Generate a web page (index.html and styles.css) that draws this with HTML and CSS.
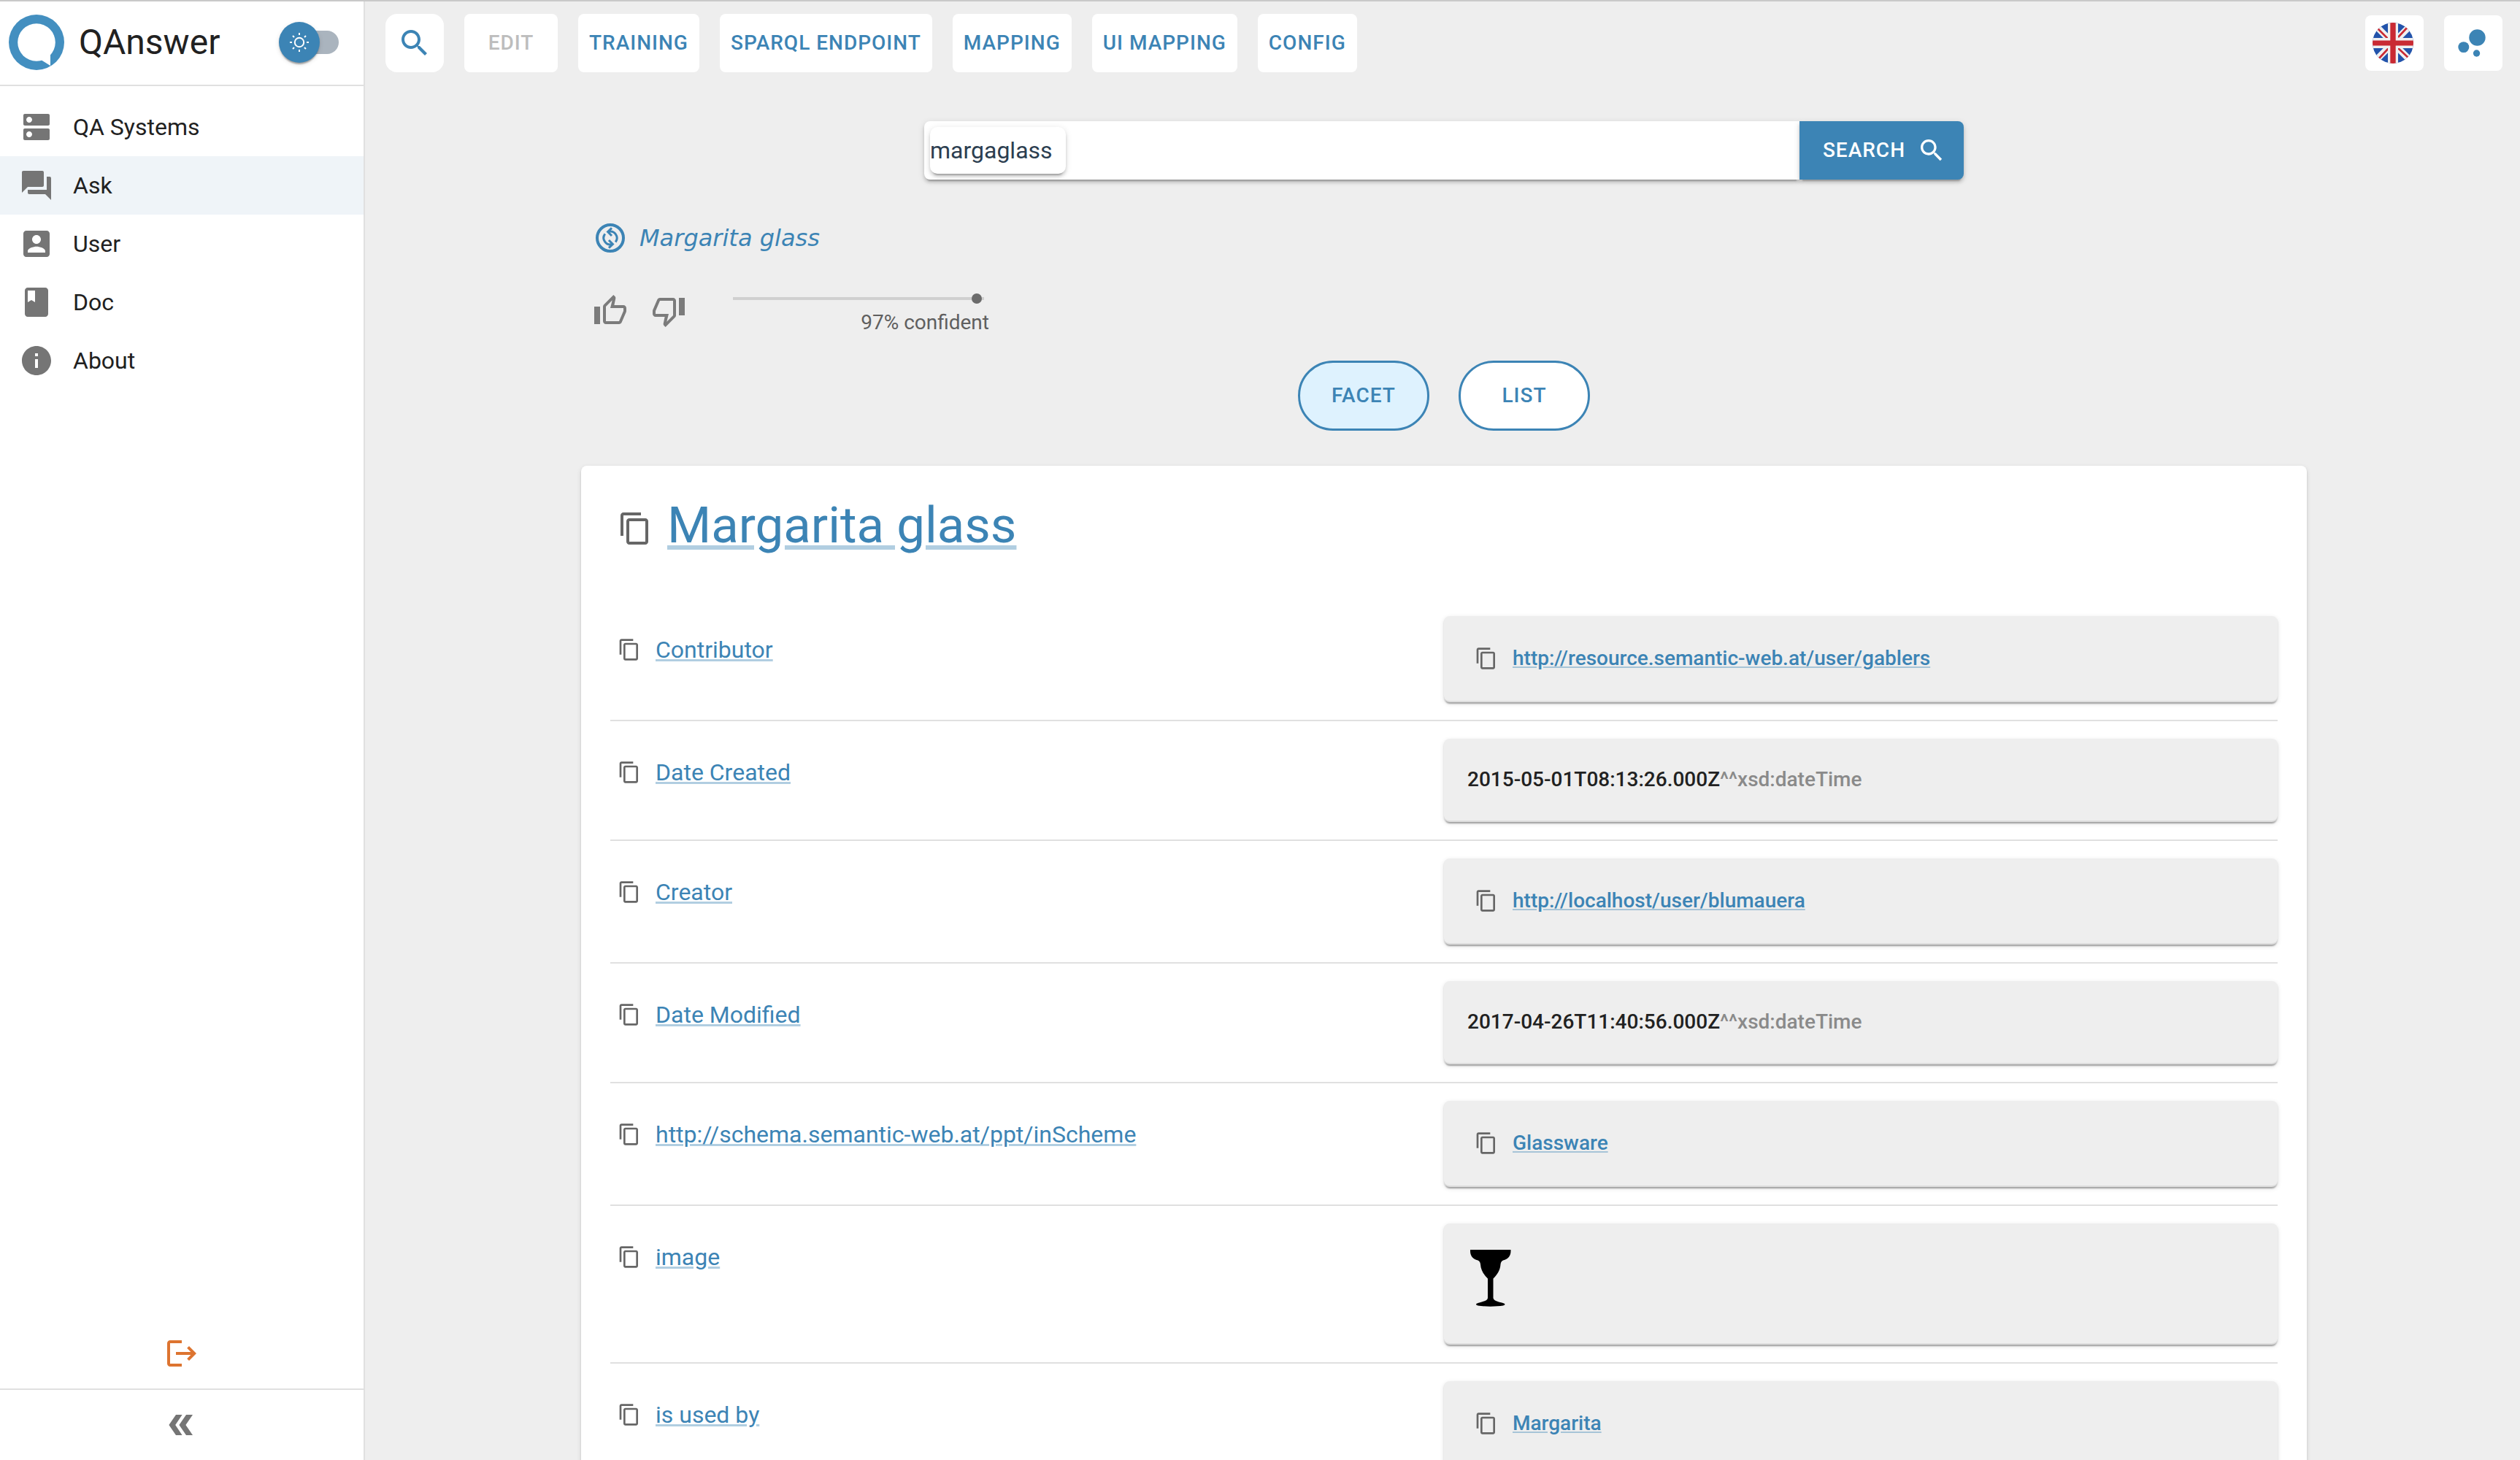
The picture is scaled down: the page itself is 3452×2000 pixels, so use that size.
FILE: index.html
```html
<!DOCTYPE html>
<html lang="en">
<head>
<meta charset="utf-8">
<meta name="viewport" content="width=device-width, initial-scale=1">
<title>QAnswer</title>
<link rel="stylesheet" href="styles.css">
</head>
<body>
<svg class="sprite" aria-hidden="true">
  <symbol id="copy" viewBox="0 0 24 24"><path d="M16 1H4c-1.1 0-2 .9-2 2v14h2V3h12V1zm3 4H8c-1.1 0-2 .9-2 2v14c0 1.1.9 2 2 2h11c1.1 0 2-.9 2-2V7c0-1.1-.9-2-2-2zm0 16H8V7h11v14z"/></symbol>
  <symbol id="search" viewBox="0 0 24 24"><path d="M15.5 14h-.79l-.28-.27C15.41 12.59 16 11.11 16 9.5 16 5.91 13.09 3 9.5 3S3 5.91 3 9.5 5.91 16 9.5 16c1.61 0 3.09-.59 4.23-1.57l.27.28v.79l5 4.99L20.49 19l-4.99-5zm-6 0C7.01 14 5 11.99 5 9.5S7.01 5 9.5 5 14 7.01 14 9.5 11.99 14 9.5 14z"/></symbol>
</svg>
<div class="app">
  <aside class="sidebar">
    <header class="brand">
      <svg class="logo" viewBox="0 0 76 76" aria-hidden="true">
        <circle cx="38" cy="38" r="38" fill="#438fc0"/>
        <circle cx="38" cy="38" r="25.8" fill="#fff"/>
        <path d="M57 54v16L45 62.600 36 55z" fill="#fff"/>
      </svg>
      <span class="brand-name">QAnswer</span>
      <label class="theme-switch">
        <input type="checkbox" class="theme-input" aria-label="Dark theme">
        <span class="theme-thumb">
          <svg class="sun" viewBox="0 0 28 28" aria-hidden="true" fill="none" stroke="#fff" stroke-width="2">
            <circle cx="14" cy="14" r="6.200"/>
            <path d="M14 1v3M14 24v3M1 14h3M24 14h3M5 5l2 2M21 21l2 2M5 23l2-2M21 7l2-2"/>
          </svg>
        </span>
      </label>
    </header>
    <nav class="menu">
      <a class="menu-item" href="#systems"><svg class="icon" viewBox="0 0 24 24" aria-hidden="true"><path d="M20 13H4c-.55 0-1 .45-1 1v6c0 .55.45 1 1 1h16c.55 0 1-.45 1-1v-6c0-.55-.45-1-1-1zM7 19c-1.100 0-2-.9-2-2s.9-2 2-2 2 .9 2 2-.9 2-2 2zM20 3H4c-.55 0-1 .45-1 1v6c0 .55.45 1 1 1h16c.55 0 1-.45 1-1V4c0-.55-.45-1-1-1zM7 9c-1.100 0-2-.9-2-2s.9-2 2-2 2 .9 2 2-.9 2-2 2z"/></svg>QA Systems</a>
      <a class="menu-item is-active" href="#ask" aria-current="page"><svg class="icon" viewBox="0 0 24 24" aria-hidden="true"><path d="M21 6h-2v9H6v2c0 .55.45 1 1 1h11l4 4V7c0-.55-.45-1-1-1zm-4 6V3c0-.55-.45-1-1-1H3c-.55 0-1 .45-1 1v14l4-4h10c.55 0 1-.45 1-1z"/></svg>Ask</a>
      <a class="menu-item" href="#user"><svg class="icon" viewBox="0 0 24 24" aria-hidden="true"><path d="M3 5v14c0 1.100.89 2 2 2h14c1.100 0 2-.9 2-2V5c0-1.100-.9-2-2-2H5c-1.110 0-2 .9-2 2zm12 4c0 1.660-1.340 3-3 3s-3-1.340-3-3 1.340-3 3-3 3 1.340 3 3zm-9 8c0-2 4-3.100 6-3.100s6 1.100 6 3.100v1H6v-1z"/></svg>User</a>
      <a class="menu-item" href="#doc"><svg class="icon" viewBox="0 0 24 24" aria-hidden="true"><path d="M18 2H6c-1.100 0-2 .9-2 2v16c0 1.100.9 2 2 2h12c1.100 0 2-.9 2-2V4c0-1.100-.9-2-2-2zM6 4h5v8l-2.500-1.500L6 12V4z"/></svg>Doc</a>
      <a class="menu-item" href="#about"><svg class="icon" viewBox="0 0 24 24" aria-hidden="true"><path d="M12 2C6.480 2 2 6.480 2 12s4.480 10 10 10 10-4.480 10-10S17.520 2 12 2zm1 15h-2v-6h2v6zm0-8h-2V7h2v2z"/></svg>About</a>
    </nav>
    <button class="logout" type="button" aria-label="Log out"><svg class="icon" viewBox="0 0 24 24" aria-hidden="true"><path d="M17 7l-1.410 1.410L18.170 11H8v2h10.170l-2.580 2.580L17 17l5-5zM4 5h8V3H4c-1.100 0-2 .9-2 2v14c0 1.100.9 2 2 2h8v-2H4V5z"/></svg></button>
    <button class="collapse" type="button" aria-label="Collapse menu"><svg class="icon" viewBox="0 0 24 24" aria-hidden="true"><path d="M8 5h4.300L7.600 12l4.700 7H8L3.200 12zM15 5h4.500l-4.800 7 4.800 7H15l-4.800-7z"/></svg></button>
  </aside>

  <main class="main">
    <div class="toolbar">
      <button class="tool tool-search" type="button" aria-label="Search"><svg class="icon" aria-hidden="true"><use href="#search"/></svg></button>
      <button class="tool tool-edit" type="button" disabled>EDIT</button>
      <button class="tool" type="button">TRAINING</button>
      <button class="tool" type="button">SPARQL ENDPOINT</button>
      <button class="tool" type="button">MAPPING</button>
      <button class="tool" type="button">UI MAPPING</button>
      <button class="tool" type="button">CONFIG</button>
      <div class="toolbar-end">
        <button class="square" type="button" aria-label="Language: English">
          <svg class="square-icon" viewBox="0 0 56 56" aria-hidden="true">
            <clipPath id="round"><circle cx="28" cy="28" r="28"/></clipPath>
            <g clip-path="url(#round)">
              <path fill="#2253ab" d="M0 0h56v56H0z"/>
              <path stroke="#f0f0f0" stroke-width="9" d="M0 0l56 56M56 0L0 56"/>
              <path stroke="#c92a33" stroke-width="2.600" d="M7 8l15 15M50 4L35 20M7 51l15-16M34 34l16 15"/>
              <path fill="#f0f0f0" d="M21 0h14v21h21v14H35v21H21V35H0V21h21z"/>
              <path fill="#c92a33" d="M24.300 0h7.400v24.500H56v7H31.700V56h-7.400V31.500H0v-7h24.300z"/>
            </g>
          </svg>
        </button>
        <button class="square" type="button" aria-label="Knowledge graph"><svg class="square-icon" viewBox="0 0 24 24" aria-hidden="true"><circle cx="7.200" cy="14.400" r="3.200"/><circle cx="14.800" cy="18" r="2"/><circle cx="15.200" cy="8.800" r="4.800"/></svg></button>
      </div>
    </div>

    <form class="search">
      <div class="search-field">
        <span class="chip">margaglass</span>
        <input class="search-input" type="text" aria-label="Question">
      </div>
      <button class="search-submit" type="submit">SEARCH<svg class="icon-medium" aria-hidden="true"><use href="#search"/></svg></button>
    </form>

    <section class="answer">
      <a class="interpretation" href="#interpretation">
        <svg class="icon" viewBox="0 0 24 24" aria-hidden="true" fill="none" stroke="currentColor">
          <circle cx="12" cy="12" r="9" stroke-width="2"/>
          <path stroke-width="1.500" d="M15.600 14.800A4.500 4.500 0 0 0 10.600 7.800M13 5.200L10.300 7.800 13 10.500M8.400 9.200A4.500 4.500 0 0 0 13.400 16.200M11 13.500L13.700 16.200 11 18.800"/>
        </svg>
        <em class="interpretation-text">Margarita glass</em>
      </a>
      <div class="feedback">
        <button class="vote" type="button" aria-label="Good answer"><svg class="icon" viewBox="0 0 24 24" aria-hidden="true"><path d="M9 21h9c.83 0 1.540-.5 1.840-1.220l3.020-7.050c.09-.23.14-.47.14-.73v-2c0-1.100-.9-2-2-2h-6.310l.95-4.570.03-.32c0-.41-.17-.79-.44-1.060L14.170 1 7.580 7.590C7.220 7.950 7 8.450 7 9v10c0 1.100.9 2 2 2zM9 9l4.340-4.340L12 10h9v2l-3 7H9V9zM1 9h4v12H1z"/></svg></button>
        <button class="vote" type="button" aria-label="Bad answer"><svg class="icon" viewBox="0 0 24 24" aria-hidden="true"><path d="M15 3H6c-.83 0-1.540.5-1.840 1.220l-3.020 7.050c-.09.23-.14.47-.14.73v2c0 1.100.9 2 2 2h6.310l-.95 4.570-.03.32c0 .41.17.79.44 1.060L9.830 23l6.590-6.590c.36-.36.58-.86.58-1.410V5c0-1.100-.9-2-2-2zm0 12l-4.340 4.340L12 14H3v-2l3-7h9v10zm4-12h4v12h-4z"/></svg></button>
        <div class="confidence">
          <input class="confidence-range" id="confidence" type="range" min="0" max="100" value="97" disabled>
          <label class="confidence-label" for="confidence">97% confident</label>
        </div>
      </div>
    </section>

    <div class="views">
      <button class="view is-selected" type="button" aria-pressed="true">FACET</button>
      <button class="view" type="button" aria-pressed="false">LIST</button>
    </div>

    <article class="card">
      <h1 class="card-title"><button class="copy" type="button" aria-label="Copy"><svg class="icon" aria-hidden="true"><use href="#copy"/></svg></button><a class="link" href="#margarita-glass">Margarita glass</a></h1>
      <table class="facts">
        <tbody>
          <tr>
            <th class="fact-name" scope="row"><div class="entry"><button class="copy" type="button" aria-label="Copy"><svg class="icon-small" aria-hidden="true"><use href="#copy"/></svg></button><a class="link" href="#contributor">Contributor</a></div></th>
            <td class="fact-cell"><div class="value"><div class="entry"><button class="copy" type="button" aria-label="Copy"><svg class="icon-small" aria-hidden="true"><use href="#copy"/></svg></button><a class="link" href="#gablers">http://resource.semantic-web.at/user/gablers</a></div></div></td>
          </tr>
          <tr>
            <th class="fact-name" scope="row"><div class="entry"><button class="copy" type="button" aria-label="Copy"><svg class="icon-small" aria-hidden="true"><use href="#copy"/></svg></button><a class="link" href="#created">Date Created</a></div></th>
            <td class="fact-cell"><div class="value">2015-05-01T08:13:26.000Z<span class="datatype">^^xsd:dateTime</span></div></td>
          </tr>
          <tr>
            <th class="fact-name" scope="row"><div class="entry"><button class="copy" type="button" aria-label="Copy"><svg class="icon-small" aria-hidden="true"><use href="#copy"/></svg></button><a class="link" href="#creator">Creator</a></div></th>
            <td class="fact-cell"><div class="value"><div class="entry"><button class="copy" type="button" aria-label="Copy"><svg class="icon-small" aria-hidden="true"><use href="#copy"/></svg></button><a class="link" href="#blumauera">http://localhost/user/blumauera</a></div></div></td>
          </tr>
          <tr>
            <th class="fact-name" scope="row"><div class="entry"><button class="copy" type="button" aria-label="Copy"><svg class="icon-small" aria-hidden="true"><use href="#copy"/></svg></button><a class="link" href="#modified">Date Modified</a></div></th>
            <td class="fact-cell"><div class="value">2017-04-26T11:40:56.000Z<span class="datatype">^^xsd:dateTime</span></div></td>
          </tr>
          <tr>
            <th class="fact-name" scope="row"><div class="entry"><button class="copy" type="button" aria-label="Copy"><svg class="icon-small" aria-hidden="true"><use href="#copy"/></svg></button><a class="link" href="#scheme">http://schema.semantic-web.at/ppt/inScheme</a></div></th>
            <td class="fact-cell"><div class="value"><div class="entry"><button class="copy" type="button" aria-label="Copy"><svg class="icon-small" aria-hidden="true"><use href="#copy"/></svg></button><a class="link" href="#glassware">Glassware</a></div></div></td>
          </tr>
          <tr>
            <th class="fact-name" scope="row"><div class="entry"><button class="copy" type="button" aria-label="Copy"><svg class="icon-small" aria-hidden="true"><use href="#copy"/></svg></button><a class="link" href="#image">image</a></div></th>
            <td class="fact-cell"><div class="value"><svg class="glass" viewBox="0 0 64 84" role="img" aria-label="Margarita glass"><path d="M4 4H59.500V6C59.500 12 56 17 49 18.500C46.500 20 46 21 45.500 24C45 32 41 38 35.500 43.500V70C36 74 42 75 49 77C52 78 52.500 79.500 49 80.500C40 82 23 82 14.500 80.500C11 79.500 11.500 78 14.500 77C21.500 75 27.500 74 28 70V43.500C22.500 38 18.500 32 18 24C17.500 21 17 20 14.500 18.500C7.500 17 4 12 4 6Z"/></svg></div></td>
          </tr>
          <tr>
            <th class="fact-name" scope="row"><div class="entry"><button class="copy" type="button" aria-label="Copy"><svg class="icon-small" aria-hidden="true"><use href="#copy"/></svg></button><a class="link" href="#used-by">is used by</a></div></th>
            <td class="fact-cell"><div class="value"><div class="entry"><button class="copy" type="button" aria-label="Copy"><svg class="icon-small" aria-hidden="true"><use href="#copy"/></svg></button><a class="link" href="#margarita">Margarita</a></div></div></td>
          </tr>
        </tbody>
      </table>
    </article>
  </main>
</div>
</body>
</html>
```
FILE: styles.css
```css
:root {
  --blue: #3c84b5;
  --line: #e0e0e0;
  --grey: #757575;
  --paper-shadow: 0 4px 2px -2px rgba(0, 0, 0, .2), 0 2px 2px rgba(0, 0, 0, .14), 0 2px 6px rgba(0, 0, 0, .12);
  --raised-shadow: 0 6px 2px -4px rgba(0, 0, 0, .2), 0 4px 4px rgba(0, 0, 0, .14), 0 2px 10px rgba(0, 0, 0, .12);
}

* { box-sizing: border-box; }

body {
  margin: 0;
  font: 400 32px/48px Roboto, "Liberation Sans", sans-serif;
  color: #212121;
  background: #eee;
}

button {
  margin: 0;
  padding: 0;
  border: 0;
  background: none;
  font: 500 28px/48px Roboto, "Liberation Sans", sans-serif;
  letter-spacing: 1px;
  color: var(--blue);
}

svg { display: block; flex: none; fill: currentColor; }

.sprite { position: absolute; width: 0; height: 0; }
.icon { width: 48px; height: 48px; }
.icon-medium { width: 40px; height: 40px; }
.icon-small { width: 32px; height: 32px; }

.app {
  display: flex;
  height: 100vh;
  border-top: 2px solid #c9c9c9;
}

/* Sidebar */

.sidebar {
  display: flex;
  flex-direction: column;
  flex: none;
  width: 500px;
  border-right: 2px solid var(--line);
  background: #fff;
}

.brand {
  display: flex;
  align-items: center;
  gap: 20px;
  height: 116px;
  padding: 0 34px 2px 12px;
  border-bottom: 2px solid var(--line);
}

.logo { width: 76px; height: 76px; }
.brand-name { font-size: 48px; line-height: 64px; }

.theme-switch {
  position: relative;
  width: 82px;
  height: 56px;
  margin-left: auto;
}

.theme-input {
  display: block;
  appearance: none;
  width: 68px;
  height: 32px;
  margin: 12px 0 12px 14px;
  border-radius: 16px;
  background: #aab4be;
}

.theme-thumb {
  position: absolute;
  inset: 0 auto auto 0;
  display: grid;
  place-items: center;
  width: 56px;
  height: 56px;
  border-radius: 50%;
  background: var(--blue);
  box-shadow: var(--paper-shadow);
}

.sun { width: 28px; height: 28px; fill: none; }

.menu { flex: 1; padding: 16px 0; }

.menu-item {
  display: flex;
  align-items: center;
  gap: 26px;
  padding: 16px 26px;
  color: inherit;
  text-decoration: none;
}

.menu-item .icon { color: var(--grey); }
.menu-item.is-active { background: #eff4f8; }

.logout {
  display: flex;
  justify-content: center;
  padding: 24px;
  color: #dd7430;
}

.collapse {
  display: flex;
  justify-content: center;
  padding: 24px;
  border-top: 2px solid var(--line);
  color: var(--grey);
}

/* Main column */

.main {
  flex: 1;
  min-width: 0;
  padding: 17px 24px 48px 28px;
  overflow-y: auto;
  scrollbar-width: none;
}

.toolbar { display: flex; align-items: center; gap: 28px; }

.tool {
  padding: 16px 15px;
  border-radius: 8px;
  background: #fff;
  white-space: nowrap;
}

.tool-search { padding: 16px; border-radius: 16px; }
.tool-edit { width: 128px; color: #bdbdbd; }

.toolbar-end { display: flex; gap: 28px; margin-left: auto; }

.square {
  padding: 10px 14px 10px 10px;
  border-radius: 8px;
  background: #fff;
}

.square-icon { width: 56px; height: 56px; }

.search {
  display: flex;
  max-width: 1424px;
  margin: 67px auto 0;
}

.search-field {
  display: flex;
  flex: 1;
  padding: 8px;
  border-radius: 8px 0 0 8px;
  background: #fff;
  box-shadow: var(--raised-shadow);
}

.chip {
  padding: 8px 18px 8px 0;
  border-radius: 10px;
  color: #2c3e50;
  background: #fff;
  box-shadow: var(--raised-shadow);
}

.search-input {
  flex: 1;
  min-width: 0;
  border: 0;
  outline: 0;
  background: none;
  font: inherit;
}

.search-submit {
  display: flex;
  align-items: center;
  gap: 16px;
  padding: 16px 24px 16px 32px;
  border-radius: 0 8px 8px 0;
  color: #fff;
  background: var(--blue);
  box-shadow: var(--raised-shadow);
}

.answer {
  max-width: 2364px;
  margin: 56px auto 0;
  padding: 0 16px;
}

.interpretation {
  display: flex;
  gap: 16px;
  width: fit-content;
  color: var(--blue);
  text-decoration: none;
}

.interpretation .icon { fill: none; }
.interpretation-text { font-family: Verdana, "DejaVu Sans", sans-serif; }

.feedback {
  display: flex;
  align-items: flex-start;
  gap: 32px;
  margin-top: 52px;
}

.vote { color: #7b7b7b; }

.confidence {
  display: flex;
  flex-direction: column;
  gap: 6px;
  width: 358px;
  margin-left: 25px;
}

.confidence-range {
  appearance: none;
  width: 100%;
  height: 14px;
  margin: 0;
  background: linear-gradient(#d0d0d0, #d0d0d0) center / calc(100% - 14px) 4px no-repeat;
}

.confidence-range::-webkit-slider-thumb {
  appearance: none;
  width: 14px;
  height: 14px;
  border-radius: 50%;
  background: #6b6b6b;
}

.confidence-label {
  font-size: 28px;
  line-height: 40px;
  text-align: right;
  color: #5f5f5f;
}

.views {
  display: flex;
  justify-content: center;
  gap: 40px;
  margin-top: 32px;
}

.view {
  width: 180px;
  height: 96px;
  border: 3px solid var(--blue);
  border-radius: 48px;
  background: #fff;
}

.view.is-selected { background: #def2fe; }

/* Answer card */

.card {
  max-width: 2364px;
  margin: 48px auto 0;
  padding: 40px;
  border-radius: 8px;
  background: #fff;
  box-shadow: var(--paper-shadow);
}

.card-title {
  display: flex;
  align-items: center;
  gap: 10px;
  margin: 0 0 58px;
  font-size: 69px;
  line-height: 84px;
  font-weight: 400;
}

.card-title .copy { margin-top: 8px; }

.copy { padding: 10px; color: #666; }

.link {
  color: var(--blue);
  text-decoration: underline;
  text-decoration-color: rgba(60, 132, 181, .4);
}

.entry { display: flex; align-items: center; gap: 10px; }

.facts {
  width: 100%;
  table-layout: fixed;
  border-spacing: 0;
}

.fact-name, .fact-cell {
  padding: 24px 0;
  border-bottom: 2px solid var(--line);
  text-align: left;
  vertical-align: top;
}

.fact-name { padding-top: 44px; font-weight: 400; }

.value {
  padding: 32px;
  border-bottom: 2px solid #ddd;
  border-radius: 8px;
  font-size: 28px;
  font-weight: 500;
  background: #eee;
  box-shadow: var(--paper-shadow);
}

.datatype { color: #8a8a8a; }

.glass { width: 64px; height: 84px; margin-bottom: 16px; color: #000; }
```
